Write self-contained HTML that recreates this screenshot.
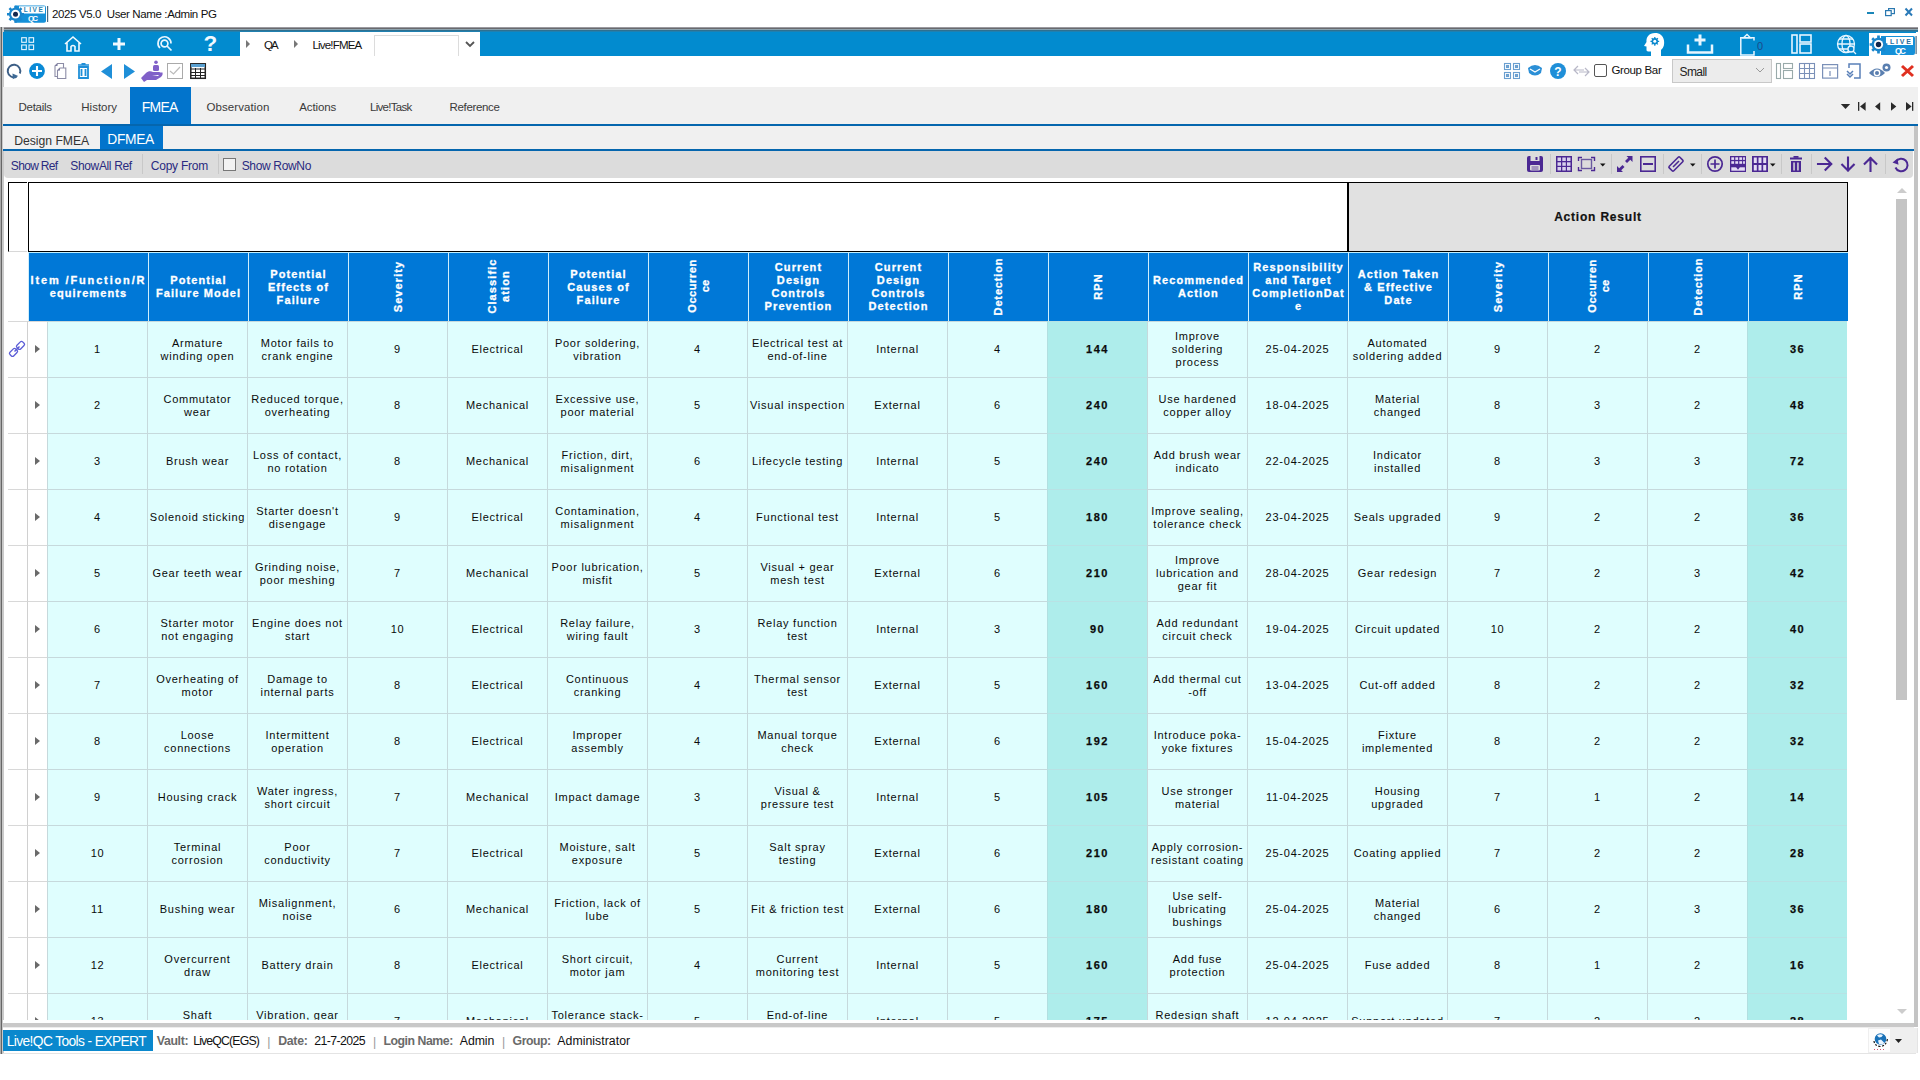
<!DOCTYPE html>
<html><head><meta charset="utf-8">
<style>
*{margin:0;padding:0;box-sizing:border-box}
html,body{width:1920px;height:1080px;overflow:hidden;background:#fff;font-family:"Liberation Sans",sans-serif;position:relative}
.a{position:absolute}
svg{position:absolute;overflow:visible}
/* title */
.title{left:52px;top:8px;font-size:11.5px;color:#111;white-space:pre;letter-spacing:-0.35px}
/* frames */
#lb{left:0;top:27px;width:4px;height:1027px;background:linear-gradient(90deg,#aaa 0 1px,#666 1px 2px,#c9c9c9 2px 4px)}
#tl{left:0;top:27px;width:1918px;height:5px;background:linear-gradient(#9a9aa0 0 1px,#6a6a6e 1px 2px,#8ea4b0 2px 3px,#2e7090 3px 4px,#2080b0 4px 5px)}
#bt{left:3px;top:32px;width:1913px;height:24px;background:#028bcf}
#crumb{left:240px;top:32px;width:240px;height:24px;background:#fff}
#inp{left:374px;top:35px;width:85px;height:21px;border:1px solid #dcdcdc;border-bottom:none;background:#fff}
.ct{font-size:12px;color:#111;top:38px}
.carr{width:0;height:0;border-left:4px solid #777;border-top:4px solid transparent;border-bottom:4px solid transparent;top:40px}
#tabs{left:3px;top:87px;width:1915px;height:37px;background:#f0f0f0}
.tab{font-size:12px;color:#3a3a3a;top:100px;letter-spacing:0.1px}
#fmea{left:130px;top:87px;width:61px;height:38px;background:#0274cc}
#bl1{left:3px;top:124px;width:1915px;height:2px;background:#0566ae}
#subtabs{left:3px;top:126px;width:1911px;height:23px;background:#f0f0f0}
#dfmea{left:100px;top:126px;width:63px;height:24px;background:#0274cc}
#bl2{left:3px;top:149px;width:1911px;height:2px;background:#0566ae}
#tb{left:4px;top:151px;width:1909px;height:27px;background:#dcdcdc;border-radius:0 0 4px 4px}
.tbt{font-size:12px;color:#2a2a80;top:157px;letter-spacing:-0.1px}
.sep{width:1px;height:20px;top:154px;background:#f6f6f6;border-left:1px solid #c8c8c8}
/* table */
#hbox{left:28px;top:182px;width:1321px;height:70px;border:1px solid #000;background:#fff}
#hsmall{left:8px;top:182px;width:19px;height:70px;border:1px solid #000;border-right:none;border-bottom:1px solid #d8d8d8;background:#fff}
#arbox{left:1347px;top:182px;width:501px;height:70px;border:1px solid #000;border-left:2px solid #000;background:#e1e1e1;font-size:12px;font-weight:bold;color:#111;text-align:center;line-height:68px;letter-spacing:0.8px;-webkit-text-stroke:0.2px #111}
.hc{position:absolute;top:252px;height:69px;border-top:1px solid #bfefff;background:#0078d7;display:flex;align-items:center;justify-content:center;color:#fff;font-weight:bold;font-size:11px;line-height:13px;text-align:center;letter-spacing:1.1px;border-left:1px solid #cfeefc;-webkit-text-stroke:0.3px #fff}
.rot{transform:translateY(-1px) rotate(-90deg);white-space:nowrap;text-align:center}
.ind{position:absolute;left:8px;width:20px;height:57px;border-top:1px solid #d8d8d8;border-right:1px solid #d0d0d0;background:#fff}
.arr{position:absolute;left:28px;width:19px;height:57px;border-top:1px solid #d8d8d8;background:#fff}
.tri{position:absolute;left:7px;top:23px;width:0;height:0;border-left:5px solid #6a6a6a;border-top:4.5px solid transparent;border-bottom:4.5px solid transparent}
.cell{position:absolute;height:57px;background:#dffefe;border-left:1px solid #c6d9dc;border-top:1px solid #c6d9dc;display:flex;align-items:center;justify-content:center;text-align:center;font-size:11px;line-height:13px;color:#0a0a0a;letter-spacing:0.75px;padding-bottom:2px}
.cell.rpn{background:#aeedeb;font-weight:bold;letter-spacing:1.5px;-webkit-text-stroke:0.25px #111;border-left:1px solid #b2dfe0;border-top:1px solid #b8e2e4}
#clip{left:3px;top:178px;width:1911px;height:842px;overflow:hidden;background:#fff}
#clip>div{position:absolute}
#rb{left:1914px;top:126px;width:4px;height:901px;background:#c4c4c4}
#bb{left:3px;top:1020px;width:1911px;height:10px;background:linear-gradient(#fdfefe 0 3px,#c8c8c8 3px 7px,#ececec 7px 8px,#fff 8px)}
#thumb{left:1896px;top:199px;width:11px;height:501px;background:#c4c4c4}
/* status */
#stat{left:3px;top:1030px;width:150px;height:21px;background:#0a88cd}
.st{top:1034px;font-size:12.3px;color:#111}
.stl{color:#666;font-weight:bold}
</style></head><body>
<!-- title bar -->
<svg style="left:0px;top:0px" width="52" height="26" viewBox="0 0 52 26">
  <path d="M15 5.5 H44 Q46 5.5 46 7.5 V21 Q46 22.8 44 22.8 H15 Z" fill="#1590d8"/>
  <rect x="19" y="6.3" width="26" height="7.2" fill="#fff"/>
  <text x="23.8" y="12.2" font-family="Liberation Sans" font-weight="bold" font-size="6.5" fill="#2a7fb0" textLength="19" lengthAdjust="spacing">LIVE</text>
  <text x="28" y="21" font-family="Liberation Sans" font-weight="bold" font-size="8" fill="#fff" textLength="10" lengthAdjust="spacing">QC</text>
  <path d="M14.21 7.73 L14.24 5.69 L16.76 5.69 L16.79 7.73 L19.17 8.71 L20.62 7.29 L22.41 9.08 L20.99 10.53 L21.97 12.91 L24.01 12.94 L24.01 15.46 L21.97 15.49 L20.99 17.87 L22.41 19.32 L20.62 21.11 L19.17 19.69 L16.79 20.67 L16.76 22.71 L14.24 22.71 L14.21 20.67 L11.83 19.69 L10.38 21.11 L8.59 19.32 L10.01 17.87 L9.03 15.49 L6.99 15.46 L6.99 12.94 L9.03 12.91 L10.01 10.53 L8.59 9.08 L10.38 7.29 L11.83 8.71Z" fill="#1a86cc"/>
  <circle cx="15.5" cy="14.2" r="4.4" fill="#fff"/>
  <circle cx="15.5" cy="14.2" r="2.5" fill="#14284e"/>
  <rect x="47" y="6" width="1.2" height="16" fill="#4a6a80"/>
</svg>

<svg style="left:1860px;top:0px" width="60" height="26" viewBox="1860 0 60 26">
  <rect x="1867" y="12" width="7" height="2" fill="#1a86b8"/>
  <rect x="1888.6" y="8.6" width="5.8" height="5" fill="none" stroke="#2a78b0" stroke-width="1.2"/>
  <rect x="1885.6" y="10.6" width="5.6" height="5" fill="#fff" stroke="#2a78b0" stroke-width="1.2"/>
  <path d="M1905.5 8.5 L1912 15.5 M1912 8.5 L1905.5 15.5" stroke="#2a7ab8" stroke-width="2"/>
</svg>

<div class="a" id="tl"></div>
<div class="a" id="lb"></div>
<div class="a" id="bt"></div>
<!-- blue toolbar icons -->
<svg style="left:21px;top:37px" width="14" height="14" fill="none" stroke="#e8f6ff" stroke-width="1.1">
  <rect x="0.7" y="0.7" width="4.6" height="4.6"/><rect x="8" y="0.7" width="4.6" height="4.6"/>
  <rect x="0.7" y="8" width="4.6" height="4.6"/><rect x="8" y="8" width="4.6" height="4.6"/>
</svg>
<svg style="left:64px;top:36px" width="18" height="16" fill="none" stroke="#f0f9ff" stroke-width="1.6">
  <path d="M1 8 L9 1 L17 8 M3 6.5 V15 H7 V10.5 Q9 8.5 11 10.5 V15 H15 V6.5"/>
</svg>
<svg style="left:112px;top:37px" width="14" height="14"><path d="M7 1 V13 M1 7 H13" stroke="#f0f9ff" stroke-width="3"/></svg>
<svg style="left:157px;top:36px" width="17" height="17" fill="none" stroke="#e8f6ff" stroke-width="1.7">
  <circle cx="7.5" cy="7.5" r="3.4"/><path d="M3 12 A6.5 6.5 0 1 1 14 7.5"/><path d="M10 10 L14.5 14.5"/>
</svg>
<div class="a" style="left:203.5px;top:32.5px;font-size:22.5px;line-height:22px;font-weight:bold;color:#f0f9ff">?</div>
<div class="a" id="crumb"></div>
<div class="a carr" style="left:246px"></div>

<div class="a carr" style="left:294px"></div>

<div class="a" id="inp"></div>
<svg style="left:465px;top:41px" width="10" height="7"><path d="M1 1 L5 5 L9 1" fill="none" stroke="#555" stroke-width="1.8"/></svg>
<!-- right blue icons -->
<svg style="left:1636px;top:30px" width="30" height="26" viewBox="1636 30 30 26">
  <path d="M1655 33 C1649 33 1646 37 1646.5 42 L1644 46 L1646.5 46.5 L1646.5 50 C1646.5 51 1647.5 51.5 1650 51.5 L1651 51.5 L1651 56 L1661 56 L1661 50 C1664 47.5 1664.5 44 1664 40.5 C1663 35.5 1660 33 1655 33Z" fill="#fff"/>
  <path d="M1654.16 38.06 L1654.15 36.95 L1655.45 36.95 L1655.44 38.06 L1656.63 38.56 L1657.42 37.77 L1658.33 38.68 L1657.54 39.47 L1658.04 40.66 L1659.15 40.65 L1659.15 41.95 L1658.04 41.94 L1657.54 43.13 L1658.33 43.92 L1657.42 44.83 L1656.63 44.04 L1655.44 44.54 L1655.45 45.65 L1654.15 45.65 L1654.16 44.54 L1652.97 44.04 L1652.18 44.83 L1651.27 43.92 L1652.06 43.13 L1651.56 41.94 L1650.45 41.95 L1650.45 40.65 L1651.56 40.66 L1652.06 39.47 L1651.27 38.68 L1652.18 37.77 L1652.97 38.56Z" fill="#0a88cd"/>
  <circle cx="1654.8" cy="41.3" r="1.5" fill="#fff"/>
</svg>
<svg style="left:1686px;top:34px" width="28" height="20" fill="none" stroke="#e8f6ff" stroke-width="2.5">
  <path d="M14 0.5 V11.5 M8.5 6 H19.5" stroke-width="3"/><path d="M2 10.5 V18.5 H26 V10.5"/>
</svg>
<svg style="left:1736px;top:30px" width="24" height="26" viewBox="1736 30 24 26">
  <path d="M1754 40.5 V37.8 H1740.8 V55 H1754 V51" fill="none" stroke="#eaf6ff" stroke-width="1.5"/>
  <path d="M1743.5 37.8 L1747 34.5 L1750.5 37.8 Z" fill="none" stroke="#eaf6ff" stroke-width="1.3"/>
</svg>
<div class="a" style="left:1757px;top:40px;font-size:11px;color:#1a4a8a">0</div>
<svg style="left:1791px;top:34px" width="22" height="20" fill="none" stroke="#e8f6ff" stroke-width="1.6">
  <rect x="1" y="1" width="5" height="18"/><rect x="9" y="1" width="11" height="7"/><rect x="9" y="10" width="11" height="9"/>
</svg>
<svg style="left:1836px;top:34px" width="22" height="20" fill="none" stroke="#e8f6ff" stroke-width="1.3">
  <circle cx="10" cy="10" r="8.5"/><ellipse cx="10" cy="10" rx="4" ry="8.5"/><path d="M1.5 10 H18.5 M3 5 H17 M3 15 H13"/>
  <circle cx="15" cy="15" r="3" fill="#0a88cd"/><path d="M17 17 L20 20"/>
</svg>
<svg style="left:1869px;top:33px" width="48" height="23" viewBox="0 0 48 23">
  <rect x="0" y="0" width="48" height="23" fill="#fff"/>
  <path d="M12 3 H44 Q46 3 46 5 V20 Q46 22 44 22 H12 Z" fill="#1590d8"/>
  <rect x="17" y="4" width="27" height="8" fill="#fff"/>
  <text x="21" y="10.5" font-family="Liberation Sans" font-weight="bold" font-size="7" fill="#2a6fa0" textLength="21" lengthAdjust="spacing">LIVE</text>
  <text x="26" y="20.5" font-family="Liberation Sans" font-weight="bold" font-size="8.5" fill="#fff" textLength="11" lengthAdjust="spacing">QC</text>
  <path d="M8.13 4.63 L8.18 2.60 L10.82 2.60 L10.87 4.63 L13.39 5.68 L14.86 4.27 L16.73 6.14 L15.32 7.61 L16.37 10.13 L18.40 10.18 L18.40 12.82 L16.37 12.87 L15.32 15.39 L16.73 16.86 L14.86 18.73 L13.39 17.32 L10.87 18.37 L10.82 20.40 L8.18 20.40 L8.13 18.37 L5.61 17.32 L4.14 18.73 L2.27 16.86 L3.68 15.39 L2.63 12.87 L0.60 12.82 L0.60 10.18 L2.63 10.13 L3.68 7.61 L2.27 6.14 L4.14 4.27 L5.61 5.68Z" fill="#1a86cc"/>
  <circle cx="9.5" cy="11.5" r="4.6" fill="#fff"/>
  <circle cx="9.5" cy="11.5" r="2.7" fill="#14284e"/>
  <rect x="46.5" y="3" width="1.2" height="18" fill="#4a6a80"/>
</svg>

<!-- second toolbar icons -->
<svg style="left:0px;top:56px" width="80" height="30" viewBox="0 56 80 30">
  <path d="M19.8 73.5 A6.3 6.3 0 1 0 16.5 76.8" fill="none" stroke="#3d5f86" stroke-width="1.9"/>
  <path d="M12.5 73.5 L18.2 76 L12.8 79.2 Z" fill="#3d6a96"/>
  <circle cx="37" cy="71" r="7.9" fill="#0a8ad6"/>
  <path d="M37 66 V76 M32 71 H42" stroke="#fff" stroke-width="2.1"/>
  <path d="M55 66 L57.5 63.5 H63.5 V76.5 H55 Z" fill="#fff" stroke="#8c8ca6" stroke-width="1.1"/>
  <path d="M57.5 70.5 L60 68 H65.8 V78.5 H57.5 Z" fill="#fff" stroke="#8c8ca6" stroke-width="1.1"/>
  <path d="M55 66 H57.5 V63.5 Z M57.5 70.5 H60 V68 Z" fill="#7a7aa0"/>
</svg>


<svg style="left:77px;top:63px" width="13" height="16"><path d="M1 2 H12 M4.5 0.8 H8.5" stroke="#1f8fd8" stroke-width="1.6"/><path d="M2 4 H11 V15 H2 Z M4.5 6 V13 M8.5 6 V13" stroke="#1f8fd8" stroke-width="1.8" fill="none"/></svg>
<svg style="left:101px;top:64px" width="12" height="15"><path d="M11 0 V15 L0 7.5 Z" fill="#1f8fd8"/></svg>
<svg style="left:124px;top:64px" width="12" height="15"><path d="M0 0 V15 L11 7.5 Z" fill="#1f8fd8"/></svg>
<svg style="left:140px;top:60px" width="23" height="22">
  <circle cx="16" cy="2.2" r="1.8" fill="#8060c8"/><rect x="13" y="5" width="6" height="6" rx="1.5" fill="#8060c8"/>
  <path d="M1 18 L6 13 C8 11 11 11 13 12 L19 12 C22 12 22 15 20 15 L12 15 L18 16 L22 12 C23 13 23 15 21 17 L16 20 L7 20 L4 22 Z" fill="#8060c8"/>
</svg>
<svg style="left:167px;top:63px" width="16" height="16"><rect x="0.5" y="0.5" width="15" height="15" fill="#fff" stroke="#aaa"/><path d="M3 8 L6.5 11 L13 4" fill="none" stroke="#bbb" stroke-width="1.2"/></svg>
<svg style="left:190px;top:63px" width="16" height="16"><rect x="0.8" y="0.8" width="14.5" height="14.5" fill="#fff" stroke="#222" stroke-width="1.5"/><rect x="1" y="1" width="14" height="3" fill="#5aa0d0"/><path d="M1 6 H15 M1 9.5 H15 M1 12.5 H15 M5.5 5 V15 M10.5 5 V15" stroke="#222" stroke-width="1"/></svg>

<!-- right second toolbar -->
<svg style="left:1504px;top:63px" width="16" height="16" fill="none" stroke="#6a9fd0" stroke-width="1.1">
  <rect x="0.5" y="0.5" width="6" height="6"/><rect x="9.5" y="0.5" width="6" height="6"/><rect x="0.5" y="9.5" width="6" height="6"/><rect x="9.5" y="9.5" width="6" height="6"/>
  <rect x="2.5" y="2.5" width="2" height="2"/><rect x="11.5" y="2.5" width="2" height="2"/><rect x="2.5" y="11.5" width="2" height="2"/><rect x="11.5" y="11.5" width="2" height="2"/>
</svg>
<svg style="left:1527px;top:64px" width="17" height="14"><path d="M1 4 Q8 -2 15 4 L14 9 Q8 14 2 9 Z" fill="#2b8fd6"/><path d="M3 5 L8 8 L13 5" stroke="#fff" stroke-width="1.3" fill="none"/></svg>
<svg style="left:1550px;top:63px" width="16" height="16"><circle cx="8" cy="8" r="8" fill="#1f8fd8"/><text x="4.3" y="12.5" font-family="Liberation Sans" font-weight="bold" font-size="12" fill="#fff">?</text></svg>
<svg style="left:1573px;top:65px" width="17" height="12" fill="none" stroke="#b8b8c8" stroke-width="1.2">
  <path d="M5 1 L1 5 L5 9 M1 5 H11"/><path d="M12 3 L16 7 L12 11 M16 7 H6"/>
</svg>
<div class="a" style="left:1594px;top:64px;width:13px;height:13px;border:1px solid #555;border-radius:2px;background:#fff"></div>

<div class="a" style="left:1672px;top:59px;width:100px;height:24px;border:1px solid #c8c8c8;background:#ececec"></div>

<svg style="left:1755px;top:67px" width="10" height="6"><path d="M1 1 L5 5 L9 1" fill="none" stroke="#999" stroke-width="1"/></svg>
<svg style="left:1776px;top:63px" width="17" height="16" fill="none" stroke="#9aa" stroke-width="1.1">
  <rect x="0.5" y="0.5" width="4" height="15"/><rect x="7.5" y="0.5" width="9" height="5"/><rect x="7.5" y="7.5" width="9" height="8"/>
</svg>
<svg style="left:1799px;top:63px" width="17" height="16" fill="none" stroke="#7a90b8" stroke-width="1.1">
  <rect x="0.5" y="0.5" width="15" height="15"/><path d="M5.5 0 V16 M10.5 0 V16 M0 5.5 H16 M0 10.5 H16"/>
</svg>
<svg style="left:1822px;top:64px" width="17" height="15" fill="none" stroke="#7a90b8" stroke-width="1.2">
  <rect x="0.6" y="0.6" width="15" height="13.5"/><path d="M0 4 H16 M8 7 V12"/>
</svg>
<svg style="left:1845px;top:63px" width="16" height="16" fill="none" stroke="#5a80b8" stroke-width="1.5">
  <path d="M4 5 V1 H15 V15 H9"/><path d="M2 8 L5 11 L8 8 M2 11 L5 14 L8 11"/>
</svg>
<svg style="left:1868px;top:63px" width="24" height="16">
  <path d="M1 10 Q9 1 17 10 Q9 18 1 10Z" fill="#5a7fb0"/><circle cx="9" cy="10" r="3.4" fill="#fff"/><circle cx="9" cy="10" r="2" fill="#5a7fb0"/>
  <circle cx="18.5" cy="4.5" r="4" fill="#5a7fb0"/><circle cx="18.5" cy="4.5" r="1.6" fill="#fff"/>
</svg>
<svg style="left:1900px;top:64px" width="15" height="14"><path d="M2 2 L13 12 M13 2 L2 12" stroke="#e03020" stroke-width="3"/></svg>

<!-- tabs -->
<div class="a" id="tabs"></div>
<div class="a" id="fmea"></div>
<div class="a" id="bl1"></div>







<svg style="left:1836px;top:98px" width="84" height="18" viewBox="1836 98 84 18" fill="#2a2a2a">
  <path d="M1840.8 104 H1850.2 L1845.5 109 Z"/>
  <rect x="1858" y="102" width="1.3" height="8.8"/><path d="M1865.6 102 V110.8 L1860 106.4 Z"/>
  <path d="M1880.2 102.3 V110.7 L1875 106.5 Z"/>
  <path d="M1891 102.3 V110.7 L1896.3 106.5 Z"/>
  <path d="M1906 102 V110.8 L1911.6 106.4 Z"/><rect x="1912" y="102" width="1.3" height="8.8"/>
</svg>
<div class="a" id="subtabs"></div>
<div class="a" id="dfmea"></div>
<div class="a" id="bl2"></div>



<!-- toolbar -->
<div class="a" id="tb"></div>


<div class="a sep" style="left:142px"></div>

<div class="a sep" style="left:218px"></div>
<div class="a" style="left:223px;top:158px;width:13px;height:13px;border:1px solid #777;background:#f2f2f2"></div>

<!-- right purple icons -->
<svg style="left:1520px;top:152px" width="396" height="26" viewBox="1520 152 396 26">
  <g fill="#4b2893" stroke="none">
    <!-- save -->
    <path d="M1529 156 H1541 Q1543 156 1543 158 V170 Q1543 172 1541 172 H1529 Q1527 172 1527 170 V158 Q1527 156 1529 156 Z"/>
    <rect x="1530.5" y="156" width="9" height="5" fill="#dcdcdc"/>
    <rect x="1535.5" y="157" width="2" height="3" fill="#4b2893"/>
    <rect x="1530" y="165" width="10" height="5.5" rx="1" fill="#dcdcdc"/>
    <path d="M1531.5 167 H1538.5 M1531.5 169 H1538.5" stroke="#4b2893" stroke-width="0.8"/>
    <!-- grid 3x3 hatched -->
    <rect x="1556" y="156" width="16" height="16"/>
    <g fill="#d8d0ec">
      <rect x="1557.5" y="157.5" width="3.5" height="3.5"/><rect x="1562.3" y="157.5" width="3.5" height="3.5"/><rect x="1567" y="157.5" width="3.5" height="3.5"/>
      <rect x="1557.5" y="162.3" width="3.5" height="3.5"/><rect x="1562.3" y="162.3" width="3.5" height="3.5"/><rect x="1567" y="162.3" width="3.5" height="3.5"/>
      <rect x="1557.5" y="167" width="3.5" height="3.5"/><rect x="1562.3" y="167" width="3.5" height="3.5"/><rect x="1567" y="167" width="3.5" height="3.5"/>
    </g>
    <!-- resize -->
    <g fill="none" stroke="#4b2893" stroke-width="1.4">
      <rect x="1581.5" y="159.5" width="10" height="9" stroke="#6a5aa0"/>
      <path d="M1578.5 161 V157.5 H1582 M1594.5 161 V157.5 H1591 M1578.5 167 V170.5 H1582 M1594.5 167 V170.5 H1591"/>
    </g>
    <path d="M1600 163.5 H1605.5 L1602.75 166.5 Z" fill="#111"/>
    <!-- expand -->
    <path d="M1632.5 156 V162 L1630.3 159.8 L1627 163 L1625 161 L1628.3 157.8 L1626.5 156 Z"/>
    <path d="M1617 172 V166 L1619.2 168.2 L1622.5 165 L1624.5 167 L1621.2 170.2 L1623 172 Z"/>
    <!-- minus box -->
    <g fill="none" stroke="#4b2893" stroke-width="1.6"><rect x="1640.8" y="156.8" width="14.4" height="14.4"/></g>
    <rect x="1643" y="163" width="10" height="2"/>
    <!-- link diamond -->
    <g fill="none" stroke="#4b2893" stroke-width="1.6">
      <rect x="-7.5" y="-3.2" width="15" height="6.4" rx="1.2" transform="translate(1676 164) rotate(-45)"/>
    </g>
    <path d="M1673 167 L1679 161" stroke="#4b2893" stroke-width="1.6"/>
    <path d="M1690 163.5 H1695.5 L1692.75 166.5 Z" fill="#111"/>
    <!-- plus circle -->
    <g fill="none" stroke="#4b2893" stroke-width="1.7"><circle cx="1715" cy="164" r="7.2"/><path d="M1715 159.5 V168.5 M1710.5 164 H1719.5"/></g>
    <!-- table add -->
    <rect x="1730" y="156" width="16" height="16"/>
    <g fill="#e4dcf4">
      <rect x="1731.3" y="157.3" width="2.8" height="2.6"/><rect x="1735.3" y="157.3" width="2.8" height="2.6"/><rect x="1739.3" y="157.3" width="2.8" height="2.6"/><rect x="1743.1" y="157.3" width="1.8" height="2.6"/>
      <rect x="1731.3" y="161.2" width="2.8" height="2.6"/><rect x="1735.3" y="161.2" width="2.8" height="2.6"/><rect x="1739.3" y="161.2" width="2.8" height="2.6"/><rect x="1743.1" y="161.2" width="1.8" height="2.6"/>
      <rect x="1731.3" y="167.3" width="13.6" height="3.4"/>
    </g>
    <path d="M1736 167 H1740 L1738 169.8 Z"/>
    <!-- table dark -->
    <rect x="1752" y="156" width="16" height="16"/>
    <g fill="#e4dcf4">
      <rect x="1753.8" y="157.5" width="3" height="5.5"/><rect x="1758.5" y="157.5" width="3" height="5.5"/><rect x="1763.2" y="157.5" width="3" height="5.5"/>
      <rect x="1753.8" y="165" width="3" height="5.5"/><rect x="1758.5" y="165" width="3" height="5.5"/><rect x="1763.2" y="165" width="3" height="5.5"/>
    </g>
    <path d="M1770 163.5 H1775.5 L1772.75 166.5 Z" fill="#111"/>
    <!-- trash -->
    <rect x="1790" y="157.5" width="12" height="2"/>
    <rect x="1793.5" y="156" width="5" height="1.8"/>
    <path d="M1791 161 H1801 V172 H1791 Z M1793.3 162.5 V170.5 H1794.8 V162.5 Z M1797.2 162.5 V170.5 H1798.7 V162.5 Z" fill-rule="evenodd"/>
    <!-- arrows -->
    <g fill="none" stroke="#4b2893" stroke-width="2.1" stroke-linecap="square">
      <path d="M1818 164 H1831 M1825.5 158.2 L1831.3 164 L1825.5 169.8"/>
      <path d="M1848 157.5 V170.5 M1842.2 164.7 L1848 170.5 L1853.8 164.7"/>
      <path d="M1870.5 171 V158 M1864.7 163.8 L1870.5 158 L1876.3 163.8"/>
    </g>
    <!-- refresh -->
    <path d="M1896 161.5 A6.3 6.3 0 1 1 1895.5 167.5" fill="none" stroke="#4b2893" stroke-width="2"/>
    <path d="M1892.5 162.5 L1897.5 158.5 L1898.5 164.8 Z"/>
  </g>
</svg>
<div class="a sep" style="left:1550px"></div>
<div class="a sep" style="left:1611px"></div>
<div class="a sep" style="left:1663px"></div>
<div class="a sep" style="left:1701px"></div>
<div class="a sep" style="left:1781px"></div>
<div class="a sep" style="left:1811px"></div>
<div class="a sep" style="left:1885px"></div>

<!-- table area -->
<div class="a" id="clip">
<div style="left:0;top:0;width:1911px;height:842px;transform:translate(-3px,-178px)">
<div id="hsmall" style="position:absolute"></div>
<div id="hbox" style="position:absolute"></div>
<div id="arbox" style="position:absolute">Action Result</div>
<div class="hc" style="left:28px;width:120px"><div class="ht"><span style='letter-spacing:1.85px'>Item /Function/R</span><br>equirements</div></div>
<div class="hc" style="left:148px;width:100px"><div class="ht">Potential<br>Failure Model</div></div>
<div class="hc" style="left:248px;width:100px"><div class="ht">Potential<br>Effects of<br>Failure</div></div>
<div class="hc" style="left:348px;width:100px"><div class="rot">Severity</div></div>
<div class="hc" style="left:448px;width:100px"><div class="rot">Classific<br>ation</div></div>
<div class="hc" style="left:548px;width:100px"><div class="ht">Potential<br>Causes of<br>Failure</div></div>
<div class="hc" style="left:648px;width:100px"><div class="rot"><span style='letter-spacing:0.55px'>Occurren</span><br><span style='letter-spacing:0.2px'>ce</span></div></div>
<div class="hc" style="left:748px;width:100px"><div class="ht">Current<br>Design<br>Controls<br>Prevention</div></div>
<div class="hc" style="left:848px;width:100px"><div class="ht">Current<br>Design<br>Controls<br>Detection</div></div>
<div class="hc" style="left:948px;width:100px"><div class="rot"><span style='letter-spacing:0.85px'>Detection</span></div></div>
<div class="hc" style="left:1048px;width:100px"><div class="rot">RPN</div></div>
<div class="hc" style="left:1148px;width:100px"><div class="ht">Recommended<br>Action</div></div>
<div class="hc" style="left:1248px;width:100px"><div class="ht">Responsibility<br>and Target<br>CompletionDat<br>e</div></div>
<div class="hc" style="left:1348px;width:100px"><div class="ht">Action Taken<br>&amp; Effective<br>Date</div></div>
<div class="hc" style="left:1448px;width:100px"><div class="rot">Severity</div></div>
<div class="hc" style="left:1548px;width:100px"><div class="rot"><span style='letter-spacing:0.55px'>Occurren</span><br><span style='letter-spacing:0.2px'>ce</span></div></div>
<div class="hc" style="left:1648px;width:100px"><div class="rot"><span style='letter-spacing:0.85px'>Detection</span></div></div>
<div class="hc" style="left:1748px;width:100px"><div class="rot">RPN</div></div>
<div class="ind" style="top:321px"></div><div class="arr" style="top:321px"><div class="tri"></div></div>
<div class="cell" style="left:47px;top:321px;width:100px"><span>1</span></div>
<div class="cell" style="left:147px;top:321px;width:100px;padding-bottom:1px"><span>Armature<br>winding open</span></div>
<div class="cell" style="left:247px;top:321px;width:100px;padding-bottom:1px"><span>Motor fails to<br>crank engine</span></div>
<div class="cell" style="left:347px;top:321px;width:100px"><span>9</span></div>
<div class="cell" style="left:447px;top:321px;width:100px"><span>Electrical</span></div>
<div class="cell" style="left:547px;top:321px;width:100px;padding-bottom:1px"><span>Poor soldering,<br>vibration</span></div>
<div class="cell" style="left:647px;top:321px;width:100px"><span>4</span></div>
<div class="cell" style="left:747px;top:321px;width:100px;padding-bottom:1px"><span>Electrical test at<br>end-of-line</span></div>
<div class="cell" style="left:847px;top:321px;width:100px"><span>Internal</span></div>
<div class="cell" style="left:947px;top:321px;width:100px"><span>4</span></div>
<div class="cell rpn" style="left:1047px;top:321px;width:100px"><span>144</span></div>
<div class="cell" style="left:1147px;top:321px;width:100px"><span>Improve<br>soldering<br>process</span></div>
<div class="cell" style="left:1247px;top:321px;width:100px"><span>25-04-2025</span></div>
<div class="cell" style="left:1347px;top:321px;width:100px;padding-bottom:1px"><span>Automated<br>soldering added</span></div>
<div class="cell" style="left:1447px;top:321px;width:100px"><span>9</span></div>
<div class="cell" style="left:1547px;top:321px;width:100px"><span>2</span></div>
<div class="cell" style="left:1647px;top:321px;width:100px"><span>2</span></div>
<div class="cell rpn" style="left:1747px;top:321px;width:100px"><span>36</span></div>
<div class="ind" style="top:377px"></div><div class="arr" style="top:377px"><div class="tri"></div></div>
<div class="cell" style="left:47px;top:377px;width:100px"><span>2</span></div>
<div class="cell" style="left:147px;top:377px;width:100px;padding-bottom:1px"><span>Commutator<br>wear</span></div>
<div class="cell" style="left:247px;top:377px;width:100px;padding-bottom:1px"><span>Reduced torque,<br>overheating</span></div>
<div class="cell" style="left:347px;top:377px;width:100px"><span>8</span></div>
<div class="cell" style="left:447px;top:377px;width:100px"><span>Mechanical</span></div>
<div class="cell" style="left:547px;top:377px;width:100px;padding-bottom:1px"><span>Excessive use,<br>poor material</span></div>
<div class="cell" style="left:647px;top:377px;width:100px"><span>5</span></div>
<div class="cell" style="left:747px;top:377px;width:100px"><span>Visual inspection</span></div>
<div class="cell" style="left:847px;top:377px;width:100px"><span>External</span></div>
<div class="cell" style="left:947px;top:377px;width:100px"><span>6</span></div>
<div class="cell rpn" style="left:1047px;top:377px;width:100px"><span>240</span></div>
<div class="cell" style="left:1147px;top:377px;width:100px;padding-bottom:1px"><span>Use hardened<br>copper alloy</span></div>
<div class="cell" style="left:1247px;top:377px;width:100px"><span>18-04-2025</span></div>
<div class="cell" style="left:1347px;top:377px;width:100px;padding-bottom:1px"><span>Material<br>changed</span></div>
<div class="cell" style="left:1447px;top:377px;width:100px"><span>8</span></div>
<div class="cell" style="left:1547px;top:377px;width:100px"><span>3</span></div>
<div class="cell" style="left:1647px;top:377px;width:100px"><span>2</span></div>
<div class="cell rpn" style="left:1747px;top:377px;width:100px"><span>48</span></div>
<div class="ind" style="top:433px"></div><div class="arr" style="top:433px"><div class="tri"></div></div>
<div class="cell" style="left:47px;top:433px;width:100px"><span>3</span></div>
<div class="cell" style="left:147px;top:433px;width:100px"><span>Brush wear</span></div>
<div class="cell" style="left:247px;top:433px;width:100px;padding-bottom:1px"><span>Loss of contact,<br>no rotation</span></div>
<div class="cell" style="left:347px;top:433px;width:100px"><span>8</span></div>
<div class="cell" style="left:447px;top:433px;width:100px"><span>Mechanical</span></div>
<div class="cell" style="left:547px;top:433px;width:100px;padding-bottom:1px"><span>Friction, dirt,<br>misalignment</span></div>
<div class="cell" style="left:647px;top:433px;width:100px"><span>6</span></div>
<div class="cell" style="left:747px;top:433px;width:100px"><span>Lifecycle testing</span></div>
<div class="cell" style="left:847px;top:433px;width:100px"><span>Internal</span></div>
<div class="cell" style="left:947px;top:433px;width:100px"><span>5</span></div>
<div class="cell rpn" style="left:1047px;top:433px;width:100px"><span>240</span></div>
<div class="cell" style="left:1147px;top:433px;width:100px;padding-bottom:1px"><span>Add brush wear<br>indicato</span></div>
<div class="cell" style="left:1247px;top:433px;width:100px"><span>22-04-2025</span></div>
<div class="cell" style="left:1347px;top:433px;width:100px;padding-bottom:1px"><span>Indicator<br>installed</span></div>
<div class="cell" style="left:1447px;top:433px;width:100px"><span>8</span></div>
<div class="cell" style="left:1547px;top:433px;width:100px"><span>3</span></div>
<div class="cell" style="left:1647px;top:433px;width:100px"><span>3</span></div>
<div class="cell rpn" style="left:1747px;top:433px;width:100px"><span>72</span></div>
<div class="ind" style="top:489px"></div><div class="arr" style="top:489px"><div class="tri"></div></div>
<div class="cell" style="left:47px;top:489px;width:100px"><span>4</span></div>
<div class="cell" style="left:147px;top:489px;width:100px"><span>Solenoid sticking</span></div>
<div class="cell" style="left:247px;top:489px;width:100px;padding-bottom:1px"><span>Starter doesn't<br>disengage</span></div>
<div class="cell" style="left:347px;top:489px;width:100px"><span>9</span></div>
<div class="cell" style="left:447px;top:489px;width:100px"><span>Electrical</span></div>
<div class="cell" style="left:547px;top:489px;width:100px;padding-bottom:1px"><span>Contamination,<br>misalignment</span></div>
<div class="cell" style="left:647px;top:489px;width:100px"><span>4</span></div>
<div class="cell" style="left:747px;top:489px;width:100px"><span>Functional test</span></div>
<div class="cell" style="left:847px;top:489px;width:100px"><span>Internal</span></div>
<div class="cell" style="left:947px;top:489px;width:100px"><span>5</span></div>
<div class="cell rpn" style="left:1047px;top:489px;width:100px"><span>180</span></div>
<div class="cell" style="left:1147px;top:489px;width:100px;padding-bottom:1px"><span>Improve sealing,<br>tolerance check</span></div>
<div class="cell" style="left:1247px;top:489px;width:100px"><span>23-04-2025</span></div>
<div class="cell" style="left:1347px;top:489px;width:100px"><span>Seals upgraded</span></div>
<div class="cell" style="left:1447px;top:489px;width:100px"><span>9</span></div>
<div class="cell" style="left:1547px;top:489px;width:100px"><span>2</span></div>
<div class="cell" style="left:1647px;top:489px;width:100px"><span>2</span></div>
<div class="cell rpn" style="left:1747px;top:489px;width:100px"><span>36</span></div>
<div class="ind" style="top:545px"></div><div class="arr" style="top:545px"><div class="tri"></div></div>
<div class="cell" style="left:47px;top:545px;width:100px"><span>5</span></div>
<div class="cell" style="left:147px;top:545px;width:100px"><span>Gear teeth wear</span></div>
<div class="cell" style="left:247px;top:545px;width:100px;padding-bottom:1px"><span>Grinding noise,<br>poor meshing</span></div>
<div class="cell" style="left:347px;top:545px;width:100px"><span>7</span></div>
<div class="cell" style="left:447px;top:545px;width:100px"><span>Mechanical</span></div>
<div class="cell" style="left:547px;top:545px;width:100px;padding-bottom:1px"><span>Poor lubrication,<br>misfit</span></div>
<div class="cell" style="left:647px;top:545px;width:100px"><span>5</span></div>
<div class="cell" style="left:747px;top:545px;width:100px;padding-bottom:1px"><span>Visual + gear<br>mesh test</span></div>
<div class="cell" style="left:847px;top:545px;width:100px"><span>External</span></div>
<div class="cell" style="left:947px;top:545px;width:100px"><span>6</span></div>
<div class="cell rpn" style="left:1047px;top:545px;width:100px"><span>210</span></div>
<div class="cell" style="left:1147px;top:545px;width:100px"><span>Improve<br>lubrication and<br>gear fit</span></div>
<div class="cell" style="left:1247px;top:545px;width:100px"><span>28-04-2025</span></div>
<div class="cell" style="left:1347px;top:545px;width:100px"><span>Gear redesign</span></div>
<div class="cell" style="left:1447px;top:545px;width:100px"><span>7</span></div>
<div class="cell" style="left:1547px;top:545px;width:100px"><span>2</span></div>
<div class="cell" style="left:1647px;top:545px;width:100px"><span>3</span></div>
<div class="cell rpn" style="left:1747px;top:545px;width:100px"><span>42</span></div>
<div class="ind" style="top:601px"></div><div class="arr" style="top:601px"><div class="tri"></div></div>
<div class="cell" style="left:47px;top:601px;width:100px"><span>6</span></div>
<div class="cell" style="left:147px;top:601px;width:100px;padding-bottom:1px"><span>Starter motor<br>not engaging</span></div>
<div class="cell" style="left:247px;top:601px;width:100px;padding-bottom:1px"><span>Engine does not<br>start</span></div>
<div class="cell" style="left:347px;top:601px;width:100px"><span>10</span></div>
<div class="cell" style="left:447px;top:601px;width:100px"><span>Electrical</span></div>
<div class="cell" style="left:547px;top:601px;width:100px;padding-bottom:1px"><span>Relay failure,<br>wiring fault</span></div>
<div class="cell" style="left:647px;top:601px;width:100px"><span>3</span></div>
<div class="cell" style="left:747px;top:601px;width:100px;padding-bottom:1px"><span>Relay function<br>test</span></div>
<div class="cell" style="left:847px;top:601px;width:100px"><span>Internal</span></div>
<div class="cell" style="left:947px;top:601px;width:100px"><span>3</span></div>
<div class="cell rpn" style="left:1047px;top:601px;width:100px"><span>90</span></div>
<div class="cell" style="left:1147px;top:601px;width:100px;padding-bottom:1px"><span>Add redundant<br>circuit check</span></div>
<div class="cell" style="left:1247px;top:601px;width:100px"><span>19-04-2025</span></div>
<div class="cell" style="left:1347px;top:601px;width:100px"><span>Circuit updated</span></div>
<div class="cell" style="left:1447px;top:601px;width:100px"><span>10</span></div>
<div class="cell" style="left:1547px;top:601px;width:100px"><span>2</span></div>
<div class="cell" style="left:1647px;top:601px;width:100px"><span>2</span></div>
<div class="cell rpn" style="left:1747px;top:601px;width:100px"><span>40</span></div>
<div class="ind" style="top:657px"></div><div class="arr" style="top:657px"><div class="tri"></div></div>
<div class="cell" style="left:47px;top:657px;width:100px"><span>7</span></div>
<div class="cell" style="left:147px;top:657px;width:100px;padding-bottom:1px"><span>Overheating of<br>motor</span></div>
<div class="cell" style="left:247px;top:657px;width:100px;padding-bottom:1px"><span>Damage to<br>internal parts</span></div>
<div class="cell" style="left:347px;top:657px;width:100px"><span>8</span></div>
<div class="cell" style="left:447px;top:657px;width:100px"><span>Electrical</span></div>
<div class="cell" style="left:547px;top:657px;width:100px;padding-bottom:1px"><span>Continuous<br>cranking</span></div>
<div class="cell" style="left:647px;top:657px;width:100px"><span>4</span></div>
<div class="cell" style="left:747px;top:657px;width:100px;padding-bottom:1px"><span>Thermal sensor<br>test</span></div>
<div class="cell" style="left:847px;top:657px;width:100px"><span>External</span></div>
<div class="cell" style="left:947px;top:657px;width:100px"><span>5</span></div>
<div class="cell rpn" style="left:1047px;top:657px;width:100px"><span>160</span></div>
<div class="cell" style="left:1147px;top:657px;width:100px;padding-bottom:1px"><span>Add thermal cut<br>-off</span></div>
<div class="cell" style="left:1247px;top:657px;width:100px"><span>13-04-2025</span></div>
<div class="cell" style="left:1347px;top:657px;width:100px"><span>Cut-off added</span></div>
<div class="cell" style="left:1447px;top:657px;width:100px"><span>8</span></div>
<div class="cell" style="left:1547px;top:657px;width:100px"><span>2</span></div>
<div class="cell" style="left:1647px;top:657px;width:100px"><span>2</span></div>
<div class="cell rpn" style="left:1747px;top:657px;width:100px"><span>32</span></div>
<div class="ind" style="top:713px"></div><div class="arr" style="top:713px"><div class="tri"></div></div>
<div class="cell" style="left:47px;top:713px;width:100px"><span>8</span></div>
<div class="cell" style="left:147px;top:713px;width:100px;padding-bottom:1px"><span>Loose<br>connections</span></div>
<div class="cell" style="left:247px;top:713px;width:100px;padding-bottom:1px"><span>Intermittent<br>operation</span></div>
<div class="cell" style="left:347px;top:713px;width:100px"><span>8</span></div>
<div class="cell" style="left:447px;top:713px;width:100px"><span>Electrical</span></div>
<div class="cell" style="left:547px;top:713px;width:100px;padding-bottom:1px"><span>Improper<br>assembly</span></div>
<div class="cell" style="left:647px;top:713px;width:100px"><span>4</span></div>
<div class="cell" style="left:747px;top:713px;width:100px;padding-bottom:1px"><span>Manual torque<br>check</span></div>
<div class="cell" style="left:847px;top:713px;width:100px"><span>External</span></div>
<div class="cell" style="left:947px;top:713px;width:100px"><span>6</span></div>
<div class="cell rpn" style="left:1047px;top:713px;width:100px"><span>192</span></div>
<div class="cell" style="left:1147px;top:713px;width:100px;padding-bottom:1px"><span>Introduce poka-<br>yoke fixtures</span></div>
<div class="cell" style="left:1247px;top:713px;width:100px"><span>15-04-2025</span></div>
<div class="cell" style="left:1347px;top:713px;width:100px;padding-bottom:1px"><span>Fixture<br>implemented</span></div>
<div class="cell" style="left:1447px;top:713px;width:100px"><span>8</span></div>
<div class="cell" style="left:1547px;top:713px;width:100px"><span>2</span></div>
<div class="cell" style="left:1647px;top:713px;width:100px"><span>2</span></div>
<div class="cell rpn" style="left:1747px;top:713px;width:100px"><span>32</span></div>
<div class="ind" style="top:769px"></div><div class="arr" style="top:769px"><div class="tri"></div></div>
<div class="cell" style="left:47px;top:769px;width:100px"><span>9</span></div>
<div class="cell" style="left:147px;top:769px;width:100px"><span>Housing crack</span></div>
<div class="cell" style="left:247px;top:769px;width:100px;padding-bottom:1px"><span>Water ingress,<br>short circuit</span></div>
<div class="cell" style="left:347px;top:769px;width:100px"><span>7</span></div>
<div class="cell" style="left:447px;top:769px;width:100px"><span>Mechanical</span></div>
<div class="cell" style="left:547px;top:769px;width:100px"><span>Impact damage</span></div>
<div class="cell" style="left:647px;top:769px;width:100px"><span>3</span></div>
<div class="cell" style="left:747px;top:769px;width:100px;padding-bottom:1px"><span>Visual &amp;<br>pressure test</span></div>
<div class="cell" style="left:847px;top:769px;width:100px"><span>Internal</span></div>
<div class="cell" style="left:947px;top:769px;width:100px"><span>5</span></div>
<div class="cell rpn" style="left:1047px;top:769px;width:100px"><span>105</span></div>
<div class="cell" style="left:1147px;top:769px;width:100px;padding-bottom:1px"><span>Use stronger<br>material</span></div>
<div class="cell" style="left:1247px;top:769px;width:100px"><span>11-04-2025</span></div>
<div class="cell" style="left:1347px;top:769px;width:100px;padding-bottom:1px"><span>Housing<br>upgraded</span></div>
<div class="cell" style="left:1447px;top:769px;width:100px"><span>7</span></div>
<div class="cell" style="left:1547px;top:769px;width:100px"><span>1</span></div>
<div class="cell" style="left:1647px;top:769px;width:100px"><span>2</span></div>
<div class="cell rpn" style="left:1747px;top:769px;width:100px"><span>14</span></div>
<div class="ind" style="top:825px"></div><div class="arr" style="top:825px"><div class="tri"></div></div>
<div class="cell" style="left:47px;top:825px;width:100px"><span>10</span></div>
<div class="cell" style="left:147px;top:825px;width:100px;padding-bottom:1px"><span>Terminal<br>corrosion</span></div>
<div class="cell" style="left:247px;top:825px;width:100px;padding-bottom:1px"><span>Poor<br>conductivity</span></div>
<div class="cell" style="left:347px;top:825px;width:100px"><span>7</span></div>
<div class="cell" style="left:447px;top:825px;width:100px"><span>Electrical</span></div>
<div class="cell" style="left:547px;top:825px;width:100px;padding-bottom:1px"><span>Moisture, salt<br>exposure</span></div>
<div class="cell" style="left:647px;top:825px;width:100px"><span>5</span></div>
<div class="cell" style="left:747px;top:825px;width:100px;padding-bottom:1px"><span>Salt spray<br>testing</span></div>
<div class="cell" style="left:847px;top:825px;width:100px"><span>External</span></div>
<div class="cell" style="left:947px;top:825px;width:100px"><span>6</span></div>
<div class="cell rpn" style="left:1047px;top:825px;width:100px"><span>210</span></div>
<div class="cell" style="left:1147px;top:825px;width:100px;padding-bottom:1px"><span>Apply corrosion-<br>resistant coating</span></div>
<div class="cell" style="left:1247px;top:825px;width:100px"><span>25-04-2025</span></div>
<div class="cell" style="left:1347px;top:825px;width:100px"><span>Coating applied</span></div>
<div class="cell" style="left:1447px;top:825px;width:100px"><span>7</span></div>
<div class="cell" style="left:1547px;top:825px;width:100px"><span>2</span></div>
<div class="cell" style="left:1647px;top:825px;width:100px"><span>2</span></div>
<div class="cell rpn" style="left:1747px;top:825px;width:100px"><span>28</span></div>
<div class="ind" style="top:881px"></div><div class="arr" style="top:881px"><div class="tri"></div></div>
<div class="cell" style="left:47px;top:881px;width:100px"><span>11</span></div>
<div class="cell" style="left:147px;top:881px;width:100px"><span>Bushing wear</span></div>
<div class="cell" style="left:247px;top:881px;width:100px;padding-bottom:1px"><span>Misalignment,<br>noise</span></div>
<div class="cell" style="left:347px;top:881px;width:100px"><span>6</span></div>
<div class="cell" style="left:447px;top:881px;width:100px"><span>Mechanical</span></div>
<div class="cell" style="left:547px;top:881px;width:100px;padding-bottom:1px"><span>Friction, lack of<br>lube</span></div>
<div class="cell" style="left:647px;top:881px;width:100px"><span>5</span></div>
<div class="cell" style="left:747px;top:881px;width:100px"><span>Fit &amp; friction test</span></div>
<div class="cell" style="left:847px;top:881px;width:100px"><span>External</span></div>
<div class="cell" style="left:947px;top:881px;width:100px"><span>6</span></div>
<div class="cell rpn" style="left:1047px;top:881px;width:100px"><span>180</span></div>
<div class="cell" style="left:1147px;top:881px;width:100px"><span>Use self-<br>lubricating<br>bushings</span></div>
<div class="cell" style="left:1247px;top:881px;width:100px"><span>25-04-2025</span></div>
<div class="cell" style="left:1347px;top:881px;width:100px;padding-bottom:1px"><span>Material<br>changed</span></div>
<div class="cell" style="left:1447px;top:881px;width:100px"><span>6</span></div>
<div class="cell" style="left:1547px;top:881px;width:100px"><span>2</span></div>
<div class="cell" style="left:1647px;top:881px;width:100px"><span>3</span></div>
<div class="cell rpn" style="left:1747px;top:881px;width:100px"><span>36</span></div>
<div class="ind" style="top:937px"></div><div class="arr" style="top:937px"><div class="tri"></div></div>
<div class="cell" style="left:47px;top:937px;width:100px"><span>12</span></div>
<div class="cell" style="left:147px;top:937px;width:100px;padding-bottom:1px"><span>Overcurrent<br>draw</span></div>
<div class="cell" style="left:247px;top:937px;width:100px"><span>Battery drain</span></div>
<div class="cell" style="left:347px;top:937px;width:100px"><span>8</span></div>
<div class="cell" style="left:447px;top:937px;width:100px"><span>Electrical</span></div>
<div class="cell" style="left:547px;top:937px;width:100px;padding-bottom:1px"><span>Short circuit,<br>motor jam</span></div>
<div class="cell" style="left:647px;top:937px;width:100px"><span>4</span></div>
<div class="cell" style="left:747px;top:937px;width:100px;padding-bottom:1px"><span>Current<br>monitoring test</span></div>
<div class="cell" style="left:847px;top:937px;width:100px"><span>Internal</span></div>
<div class="cell" style="left:947px;top:937px;width:100px"><span>5</span></div>
<div class="cell rpn" style="left:1047px;top:937px;width:100px"><span>160</span></div>
<div class="cell" style="left:1147px;top:937px;width:100px;padding-bottom:1px"><span>Add fuse<br>protection</span></div>
<div class="cell" style="left:1247px;top:937px;width:100px"><span>25-04-2025</span></div>
<div class="cell" style="left:1347px;top:937px;width:100px"><span>Fuse added</span></div>
<div class="cell" style="left:1447px;top:937px;width:100px"><span>8</span></div>
<div class="cell" style="left:1547px;top:937px;width:100px"><span>1</span></div>
<div class="cell" style="left:1647px;top:937px;width:100px"><span>2</span></div>
<div class="cell rpn" style="left:1747px;top:937px;width:100px"><span>16</span></div>
<div class="ind" style="top:993px"></div><div class="arr" style="top:993px"><div class="tri"></div></div>
<div class="cell" style="left:47px;top:993px;width:100px"><span>13</span></div>
<div class="cell" style="left:147px;top:993px;width:100px;padding-bottom:1px"><span>Shaft<br>misalignment</span></div>
<div class="cell" style="left:247px;top:993px;width:100px;padding-bottom:1px"><span>Vibration, gear<br>damage</span></div>
<div class="cell" style="left:347px;top:993px;width:100px"><span>7</span></div>
<div class="cell" style="left:447px;top:993px;width:100px"><span>Mechanical</span></div>
<div class="cell" style="left:547px;top:993px;width:100px;padding-bottom:1px"><span>Tolerance stack-<br>up</span></div>
<div class="cell" style="left:647px;top:993px;width:100px"><span>5</span></div>
<div class="cell" style="left:747px;top:993px;width:100px;padding-bottom:1px"><span>End-of-line<br>alignment check</span></div>
<div class="cell" style="left:847px;top:993px;width:100px"><span>Internal</span></div>
<div class="cell" style="left:947px;top:993px;width:100px"><span>5</span></div>
<div class="cell rpn" style="left:1047px;top:993px;width:100px"><span>175</span></div>
<div class="cell" style="left:1147px;top:993px;width:100px;padding-bottom:1px"><span>Redesign shaft<br>support</span></div>
<div class="cell" style="left:1247px;top:993px;width:100px"><span>12-04-2025</span></div>
<div class="cell" style="left:1347px;top:993px;width:100px"><span>Support updated</span></div>
<div class="cell" style="left:1447px;top:993px;width:100px"><span>7</span></div>
<div class="cell" style="left:1547px;top:993px;width:100px"><span>2</span></div>
<div class="cell" style="left:1647px;top:993px;width:100px"><span>2</span></div>
<div class="cell rpn" style="left:1747px;top:993px;width:100px"><span>28</span></div>
<svg style="left:6px;top:336px" width="24" height="26" viewBox="0 0 24 26">
  <g fill="none" stroke="#5a5cd6" stroke-width="1.3">
    <rect x="-4" y="-2.6" width="8" height="5.2" rx="1.6" transform="translate(7.5 16.4) rotate(-45)"/>
    <rect x="-4" y="-2.6" width="8" height="5.2" rx="1.6" transform="translate(14.5 9.4) rotate(-45)"/>
    <path d="M8.5 15.5 L13.5 10.5" stroke-width="1.5"/>
  </g>
</svg>
</div>
</div>
<div class="a" id="thumb"></div>
<div class="a" style="left:3px;top:178px;width:1px;height:849px;background:#cacaca"></div>
<svg style="left:1896px;top:187px" width="12" height="7"><path d="M1 6 L6 1 L11 6 Z" fill="#ccc"/></svg>
<svg style="left:1896px;top:1008px" width="12" height="7"><path d="M1 1 L6 6 L11 1 Z" fill="#ccc"/></svg>
<div class="a" id="bb"></div>
<div class="a" id="rb"></div>

<!-- status bar -->












<div class="a" style="left:3px;top:1053px;width:1913px;height:1px;background:#e4e4e4"></div>
<div class="a" style="left:1868px;top:1028px;width:50px;height:25px;background:#efefef;border-right:1px solid #e4e4e4"></div>
<div class="a" style="left:1869px;top:1029px;width:21px;height:23px;background:#fdfdfd"></div>
<svg style="left:1856px;top:1026px" width="56" height="30" viewBox="0 0 56 30">
  <circle cx="24.5" cy="13" r="5.8" fill="#1a72b8"/>
  <path d="M21 9.5 Q24 7.5 27 9 L25.5 11 L23 11.5 Z M22 14.5 L25 13.5 L28.5 17 Q26 19 23 18 Z" fill="#e8f4ff"/>
  <path d="M18 15 Q18.5 20 24.5 20.5 Q30 20 31.5 13" fill="none" stroke="#111" stroke-width="1.2" stroke-dasharray="2 1.6"/>
  <path d="M18 23.5 H30" stroke="#d04060" stroke-width="0.9" stroke-dasharray="1 2"/>
  <path d="M39 13 H46 L42.5 17 Z" fill="#222"/>
</svg>
<div class="a" id="stat"></div>
<div class="a" style="left:52.00px;top:9.27px;font-size:11.5px;line-height:11.5px;letter-spacing:-0.373px;color:#111;font-weight:normal;;white-space:pre">2025 V5.0  User Name :Admin PG</div>
<div class="a" style="left:264.00px;top:40.27px;font-size:11.5px;line-height:11.5px;letter-spacing:-1.945px;color:#111;font-weight:normal;;white-space:pre">QA</div>
<div class="a" style="left:312.50px;top:40.27px;font-size:11.5px;line-height:11.5px;letter-spacing:-0.821px;color:#111;font-weight:normal;;white-space:pre">Live!FMEA</div>
<div class="a" style="left:1611.40px;top:65.27px;font-size:11.5px;line-height:11.5px;letter-spacing:-0.340px;color:#111;font-weight:normal;;white-space:pre">Group Bar</div>
<div class="a" style="left:1679.50px;top:65.84px;font-size:12px;line-height:12px;letter-spacing:-0.585px;color:#222;font-weight:normal;;white-space:pre">Small</div>
<div class="a" style="left:18.60px;top:102.27px;font-size:11.5px;line-height:11.5px;letter-spacing:-0.300px;color:#3a3a3a;font-weight:normal;;white-space:pre">Details</div>
<div class="a" style="left:81.30px;top:102.27px;font-size:11.5px;line-height:11.5px;letter-spacing:-0.005px;color:#3a3a3a;font-weight:normal;;white-space:pre">History</div>
<div class="a" style="left:141.70px;top:100.15px;font-size:14px;line-height:14px;letter-spacing:-0.751px;color:#fff;font-weight:normal;;white-space:pre">FMEA</div>
<div class="a" style="left:206.40px;top:102.27px;font-size:11.5px;line-height:11.5px;letter-spacing:0.089px;color:#3a3a3a;font-weight:normal;;white-space:pre">Observation</div>
<div class="a" style="left:299.30px;top:102.27px;font-size:11.5px;line-height:11.5px;letter-spacing:-0.110px;color:#3a3a3a;font-weight:normal;;white-space:pre">Actions</div>
<div class="a" style="left:370.00px;top:102.27px;font-size:11.5px;line-height:11.5px;letter-spacing:-0.711px;color:#3a3a3a;font-weight:normal;;white-space:pre">Live!Task</div>
<div class="a" style="left:449.50px;top:102.27px;font-size:11.5px;line-height:11.5px;letter-spacing:-0.333px;color:#3a3a3a;font-weight:normal;;white-space:pre">Reference</div>
<div class="a" style="left:14.30px;top:134.67px;font-size:12.2px;line-height:12.2px;letter-spacing:-0.035px;color:#333;font-weight:normal;;white-space:pre">Design FMEA</div>
<div class="a" style="left:107.30px;top:132.82px;font-size:13.8px;line-height:13.8px;letter-spacing:-0.347px;color:#fff;font-weight:normal;;white-space:pre">DFMEA</div>
<div class="a" style="left:10.80px;top:159.84px;font-size:12px;line-height:12px;letter-spacing:-0.670px;color:#2a2a80;font-weight:normal;;white-space:pre">Show Ref</div>
<div class="a" style="left:70.30px;top:159.84px;font-size:12px;line-height:12px;letter-spacing:-0.353px;color:#2a2a80;font-weight:normal;;white-space:pre">ShowAll Ref</div>
<div class="a" style="left:150.80px;top:159.84px;font-size:12px;line-height:12px;letter-spacing:-0.231px;color:#2a2a80;font-weight:normal;;white-space:pre">Copy From</div>
<div class="a" style="left:241.70px;top:159.84px;font-size:12px;line-height:12px;letter-spacing:-0.336px;color:#2a2a80;font-weight:normal;;white-space:pre">Show RowNo</div>
<div class="a" style="left:6.80px;top:1035.32px;font-size:13.8px;line-height:13.8px;letter-spacing:-0.622px;color:#fff;font-weight:normal;;white-space:pre">Live!QC Tools - EXPERT</div>
<div class="a" style="left:156.80px;top:1035.09px;font-size:12.3px;line-height:12.3px;letter-spacing:-0.357px;color:#6a6a6a;font-weight:bold;;white-space:pre">Vault:</div>
<div class="a" style="left:193.20px;top:1035.09px;font-size:12.3px;line-height:12.3px;letter-spacing:-0.847px;color:#111;font-weight:normal;;white-space:pre">LiveQC(EGS)</div>
<div class="a" style="left:267.20px;top:1036.09px;font-size:12.3px;line-height:12.3px;letter-spacing:0.000px;color:#999;font-weight:normal;;white-space:pre">|</div>
<div class="a" style="left:278.20px;top:1035.09px;font-size:12.3px;line-height:12.3px;letter-spacing:-0.288px;color:#6a6a6a;font-weight:bold;;white-space:pre">Date:</div>
<div class="a" style="left:314.30px;top:1035.09px;font-size:12.3px;line-height:12.3px;letter-spacing:-0.603px;color:#111;font-weight:normal;;white-space:pre">21-7-2025</div>
<div class="a" style="left:373.00px;top:1036.09px;font-size:12.3px;line-height:12.3px;letter-spacing:0.000px;color:#999;font-weight:normal;;white-space:pre">|</div>
<div class="a" style="left:383.40px;top:1035.09px;font-size:12.3px;line-height:12.3px;letter-spacing:-0.457px;color:#6a6a6a;font-weight:bold;;white-space:pre">Login Name:</div>
<div class="a" style="left:459.80px;top:1035.09px;font-size:12.3px;line-height:12.3px;letter-spacing:-0.079px;color:#111;font-weight:normal;;white-space:pre">Admin</div>
<div class="a" style="left:502.00px;top:1036.09px;font-size:12.3px;line-height:12.3px;letter-spacing:0.000px;color:#999;font-weight:normal;;white-space:pre">|</div>
<div class="a" style="left:512.60px;top:1035.09px;font-size:12.3px;line-height:12.3px;letter-spacing:-0.497px;color:#6a6a6a;font-weight:bold;;white-space:pre">Group:</div>
<div class="a" style="left:557.30px;top:1035.09px;font-size:12.3px;line-height:12.3px;letter-spacing:0.030px;color:#111;font-weight:normal;;white-space:pre">Administrator</div>
</body></html>
